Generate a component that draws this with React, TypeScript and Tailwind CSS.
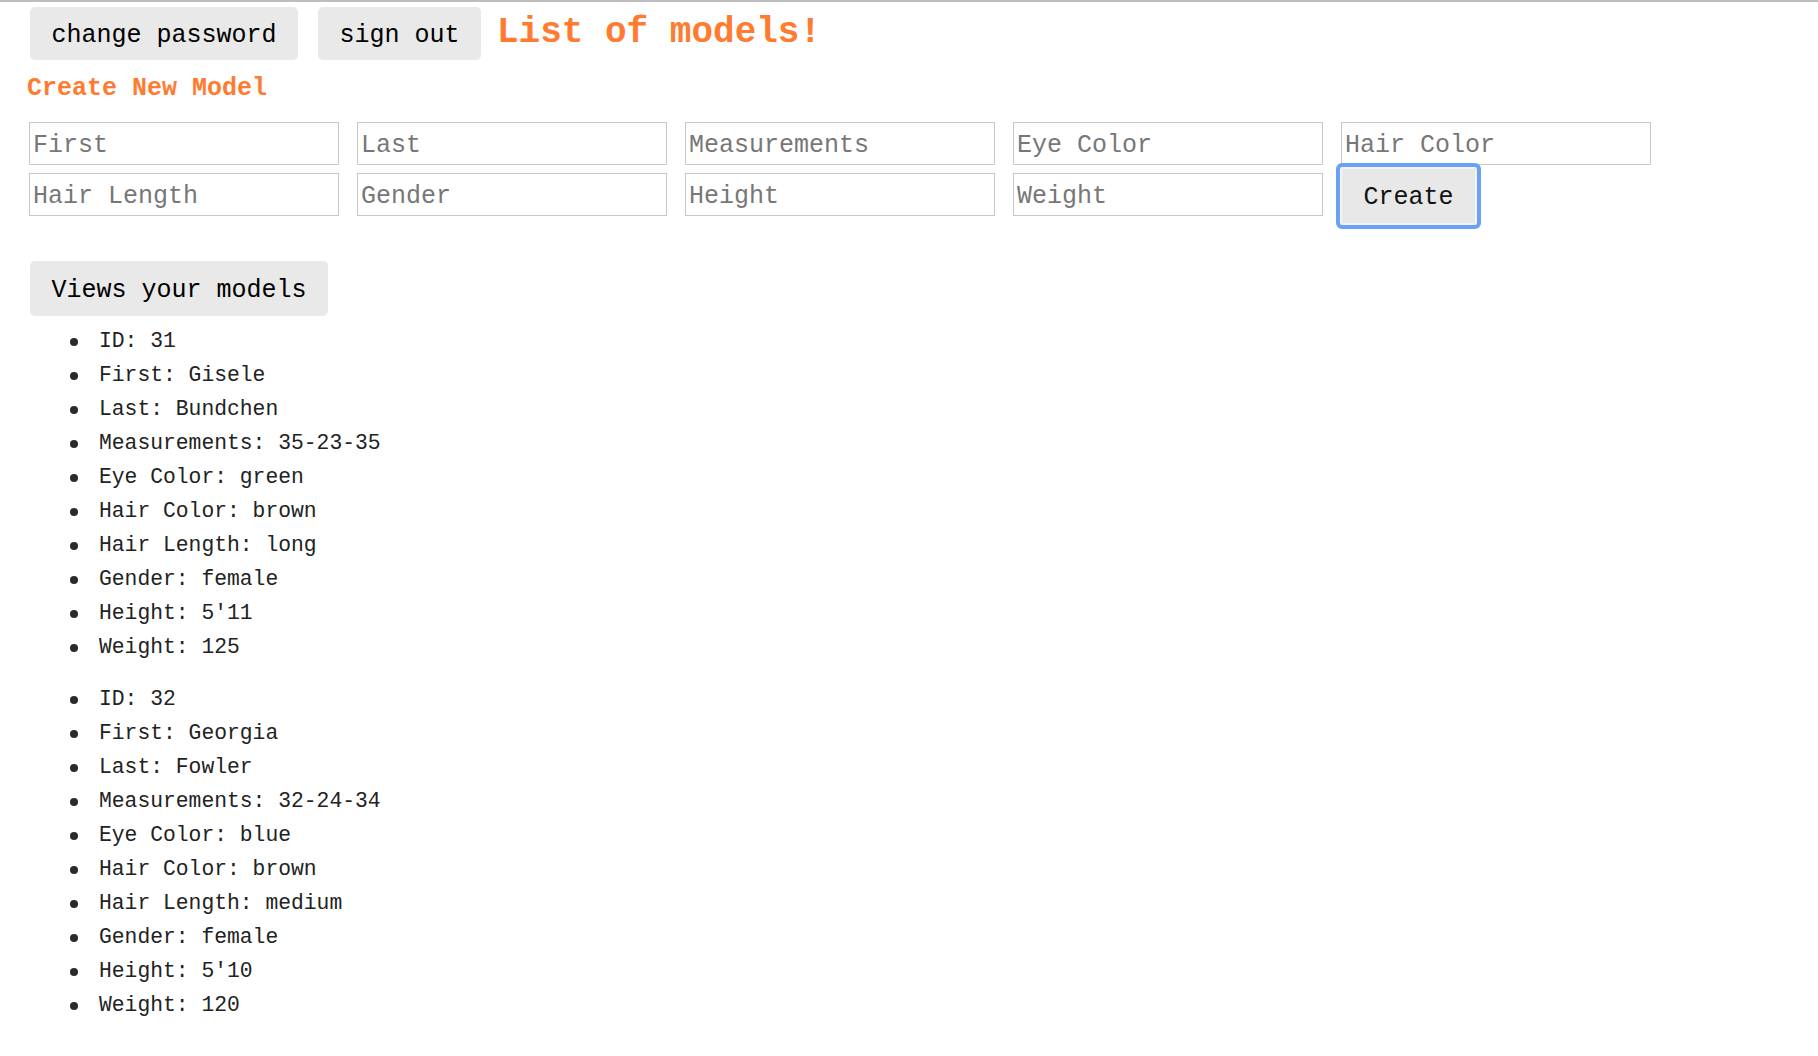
import React from 'react';

const mono = { fontFamily: '"Liberation Mono", "Courier New", monospace' };

const models = [
  {
    id: 31,
    first: 'Gisele',
    last: 'Bundchen',
    measurements: '35-23-35',
    eye: 'green',
    hair: 'brown',
    length: 'long',
    gender: 'female',
    height: "5'11",
    weight: 125,
  },
  {
    id: 32,
    first: 'Georgia',
    last: 'Fowler',
    measurements: '32-24-34',
    eye: 'blue',
    hair: 'brown',
    length: 'medium',
    gender: 'female',
    height: "5'10",
    weight: 120,
  },
];

const Field = ({ placeholder }: { placeholder: string }) => (
  <input
    placeholder={placeholder}
    className="w-[310px] h-[43px] border border-[#c8c8c8] bg-white pl-[3px] pt-[3px] text-[25px] text-[#222] placeholder:text-[#777] outline-none"
    style={mono}
  />
);

const GrayButton = ({ children, className = '' }: { children: React.ReactNode; className?: string }) => (
  <button
    className={`bg-[#e9e9e9] rounded-[5px] text-[25px] text-black px-[20px] pt-[4px] ${className}`}
    style={mono}
  >
    {children}
  </button>
);

export default function App() {
  return (
    <div className="min-h-screen bg-white" style={mono}>
      <div className="h-[2px] bg-[#bdbdbd]" />

      <div className="flex items-start pl-[30px] pt-[5px]">
        <GrayButton className="h-[53px] w-[268px]">change password</GrayButton>
        <GrayButton className="h-[53px] w-[163px] ml-[20px]">sign out</GrayButton>
        <h1 className="ml-[16px] mt-[6px] text-[36px] leading-[40px] font-bold text-[#ff7b30]">List of models!</h1>
      </div>

      <h2 className="ml-[27px] mt-[14px] text-[25px] leading-[30px] font-bold text-[#ff7b30]">Create New Model</h2>

      <div className="ml-[29px] mt-[18px] flex flex-col gap-[8px]">
        <div className="flex gap-[18px]">
          <Field placeholder="First" />
          <Field placeholder="Last" />
          <Field placeholder="Measurements" />
          <Field placeholder="Eye Color" />
          <Field placeholder="Hair Color" />
        </div>
        <div className="flex items-center gap-[18px] h-[43px]">
          <Field placeholder="Hair Length" />
          <Field placeholder="Gender" />
          <Field placeholder="Height" />
          <Field placeholder="Weight" />
          <button
            className="ml-[-5px] mt-[3px] w-[145px] h-[66px] pt-[4px] rounded-[6px] border-[4px] border-[#6aa0f5] bg-[#e8e8e8] text-[25px] text-[#111] shadow-[inset_0_0_0_2px_#f4f4f4]"
            style={mono}
          >
            Create
          </button>
        </div>
      </div>

      <div className="ml-[30px] mt-[45px]">
        <GrayButton className="h-[55px] w-[298px]">Views your models</GrayButton>
      </div>

      <div className="mt-[9px] flex flex-col gap-[18px]">
        {models.map((m) => (
          <ul key={m.id} className="flex flex-col">
            {[
              `ID: ${m.id}`,
              `First: ${m.first}`,
              `Last: ${m.last}`,
              `Measurements: ${m.measurements}`,
              `Eye Color: ${m.eye}`,
              `Hair Color: ${m.hair}`,
              `Hair Length: ${m.length}`,
              `Gender: ${m.gender}`,
              `Height: ${m.height}`,
              `Weight: ${m.weight}`,
            ].map((line) => (
              <li key={line} className="flex items-center h-[34px] text-[21.33px] text-[#222]">
                <span className="ml-[70px] mr-[21px] w-[8px] h-[8px] rounded-full bg-[#2a2a2a]" />
                <span>{line}</span>
              </li>
            ))}
          </ul>
        ))}
      </div>
    </div>
  );
}
